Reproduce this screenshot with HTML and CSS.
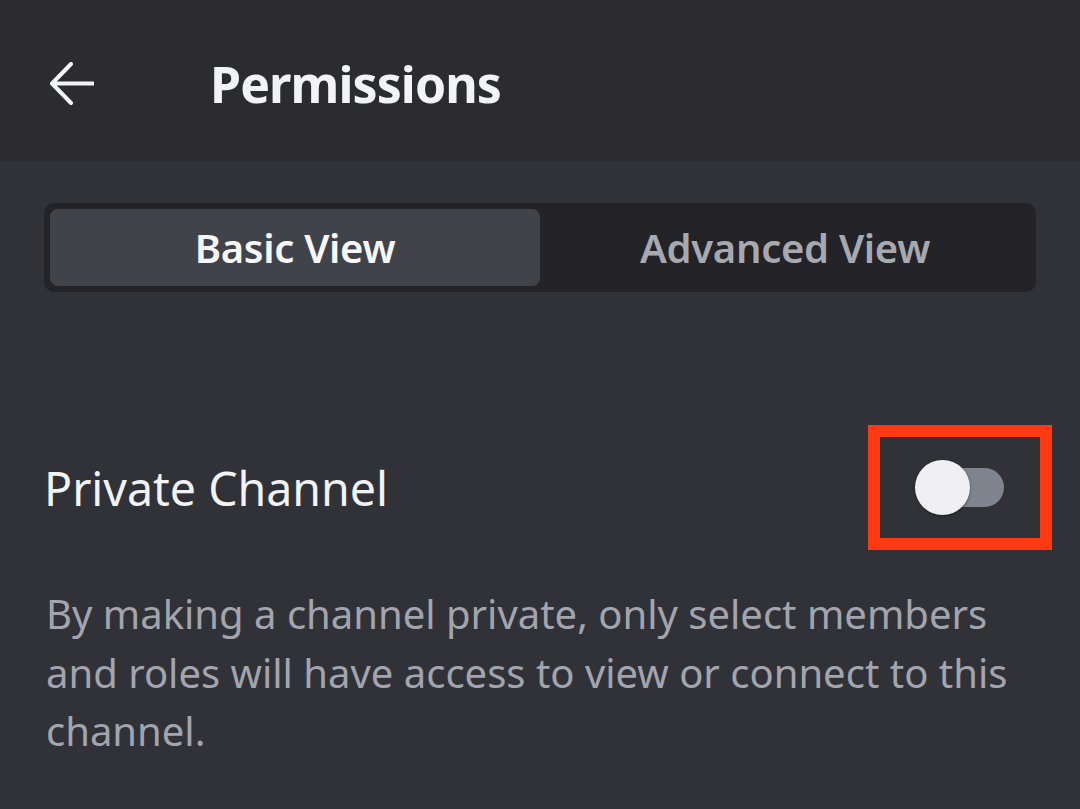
FILE: index.html
```html
<!DOCTYPE html>
<html lang="en">
<head>
  <title>Permissions</title>
  <meta charset="UTF-8">
  <meta name="viewport" content="width=device-width, initial-scale=1">

  <link rel="stylesheet" href="styles.css">
</head>
<body>

  <div class="header">
    <svg class="back-icon" width="44" height="44" viewBox="0 0 44 44">
      <path d="M21 2 L2 21.5 L21 41 M2 21.5 H43" fill="none" stroke="#f2f3f5" stroke-width="4" stroke-linecap="round" stroke-linejoin="round"/>
    </svg>
    <h1>Permissions</h1>
  </div>

  <div class="main">
    <div class="tabs">
      <div class="tab active">Basic View</div>
      <div class="tab">Advanced View</div>
    </div>

    <div class="setting-row">
      <span class="setting-label">Private Channel</span>
      <div class="highlight">
        <div class="toggle">
          <div class="toggle-knob"></div>
        </div>
      </div>
    </div>

    <p class="description">By making a channel private, only select members and roles will have access to view or connect to this channel.</p>
  </div>

</body>
</html>
```

FILE: styles.css
```css
* {
  box-sizing: border-box;
}

body {
  margin: 0;
  font-family: "Noto Sans", "Open Sans", sans-serif;
  background-color: #313238;
  color: #f2f3f5;
  height: 100vh;
  overflow: hidden;
}

.header {
  height: 161px;
  background-color: #2b2b30;
  display: flex;
  align-items: center;
  padding: 6px 0 0 50px;
}

.back-icon {
  display: block;
  flex-shrink: 0;
}

.header h1 {
  margin: 0 0 0 116px;
  font-size: 50px;
  font-weight: 700;
  color: #f2f3f5;
  letter-spacing: -0.9px;
}

.main {
  padding: 42px 44px 0 44px;
}

/* segmented control */
.tabs {
  display: flex;
  height: 89px;
  padding: 6px;
  background-color: #232328;
  border-radius: 10px;
}

.tab {
  flex: 1;
  display: flex;
  align-items: center;
  justify-content: center;
  font-size: 40px;
  font-weight: 600;
  color: #a6a9b0;
  border-radius: 8px;
  letter-spacing: -0.3px;
}

.tab.active {
  background-color: #41434a;
  color: #f7f7f8;
}

.setting-row {
  display: flex;
  align-items: center;
  justify-content: space-between;
  margin-top: 133px;
  margin-right: -16px;
}

.setting-label {
  font-size: 46.5px;
  color: #f2f3f5;
}

/* red annotation box round the switch */
.highlight {
  width: 184px;
  height: 125px;
  border: 12px solid #ff3a12;
  display: flex;
  align-items: center;
  justify-content: center;
}

.toggle {
  position: relative;
  width: 88px;
  height: 39px;
  border-radius: 20px;
  background-color: #80848e;
}

.toggle-knob {
  position: absolute;
  left: -1px;
  top: -8px;
  width: 55px;
  height: 55px;
  border-radius: 50%;
  background-color: #f0f0f2;
  box-shadow: 0 1px 3px rgba(0, 0, 0, 0.45);
}

.description {
  margin: 35px -24px 0 2px;
  font-size: 40px;
  line-height: 58.5px;
  color: #a2a5ad;
}
```
